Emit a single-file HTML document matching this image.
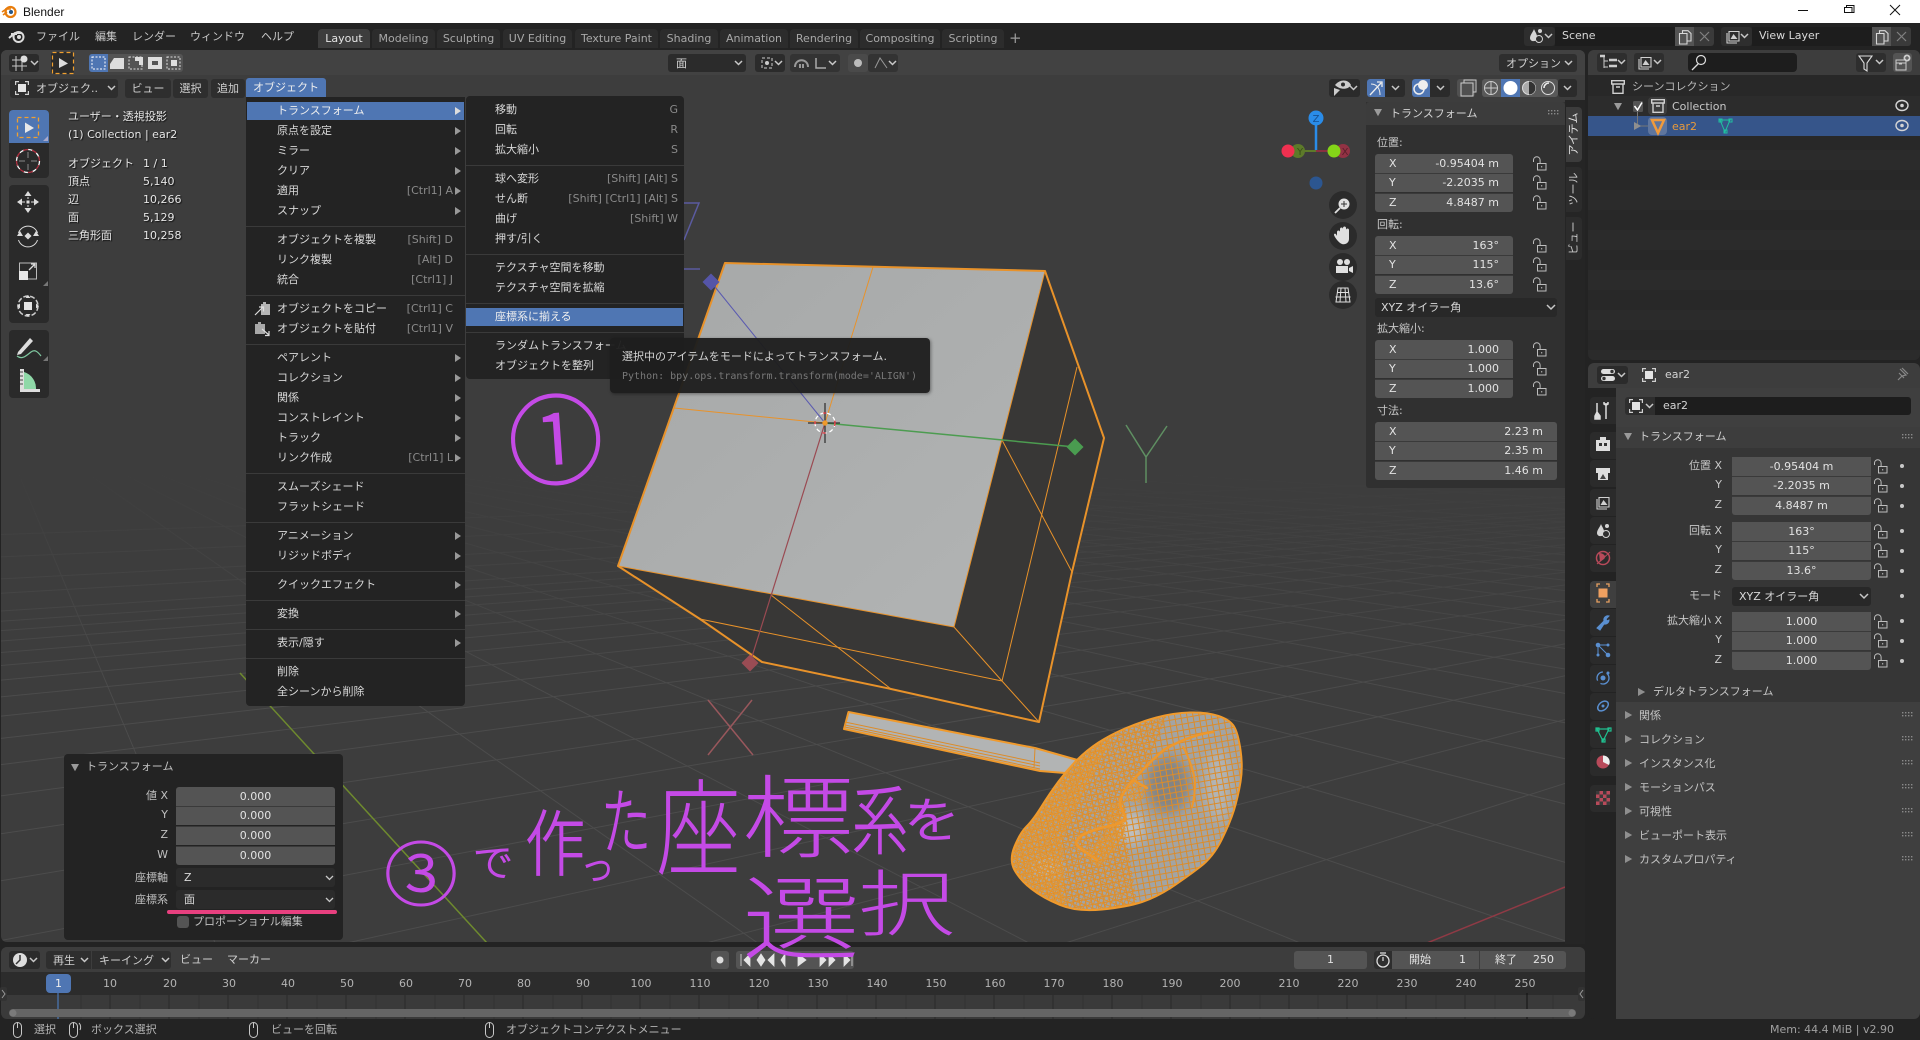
<!DOCTYPE html>
<html lang="ja"><head><meta charset="utf-8"><title>Blender</title>
<style>
*{box-sizing:border-box}
html,body{margin:0;padding:0;background:#232323}
body{position:relative;width:1920px;height:1040px;overflow:hidden;font:11px/18px "DejaVu Sans","Noto Sans CJK JP",sans-serif;color:#d9d9d9}
div{position:absolute;white-space:nowrap}
.b{background:#2b2b2b;border-radius:3px}
.tab{top:29px;height:19px;background:#2c2c2c;border-radius:4px 4px 0 0;color:#a8a8a8;text-align:center;line-height:20px}
.mi{top:28px;color:#c8c8c8}
.h{color:#d0d0d0;line-height:20px;text-align:center;background:#2e2e2e;border-radius:3px;height:19px}
.m{left:277px}.k{right:1467px;color:#8a8a8a}.a{left:455px;width:0;height:0;border-left:6px solid #999;border-top:4px solid transparent;border-bottom:4px solid transparent}
.n{left:495px}.j{right:1242px;color:#8a8a8a}
.sep{height:1px;background:#3a3a3a}
.o{left:68px;color:#e6e6e6;text-shadow:1px 1px 1px #111}.v{left:143px;color:#e6e6e6;text-shadow:1px 1px 1px #111}
.f{background:#545454;color:#e2e2e2;height:19px;line-height:19px}
.g{box-shadow:inset 0 1px #3a3a3a}
.f i{position:absolute;left:14px;font-style:normal}.f u{position:absolute;right:14px;text-decoration:none}
.c{text-align:center}
.d{background:#282828;height:19px;line-height:19px;border-radius:3px;color:#d9d9d9}
.l{color:#c8c8c8}
.rl{right:198px;color:#c8c8c8}
.tb{left:1590px;width:26px;height:27px;background:#2b2b2b;border-radius:4px 0 0 4px}
.ph{left:1639px;color:#c4c4c4}
.r{top:975px;transform:translateX(-50%);color:#b4b4b4}
.vt{transform:translate(-50%,-50%) rotate(-90deg);color:#c8c8c8}
.st{top:1021px;color:#b4b4b4}
.rd{color:#c0c0c0}
svg{position:absolute;left:0;top:0}
</style></head><body>

<!-- title bar -->
<div style="left:0;top:0;width:1920px;height:23px;background:#fff"></div>
<div style="left:23px;top:4px;color:#111;font:12px/16px 'Liberation Sans',sans-serif">Blender</div>

<!-- top bar -->
<div class="mi" style="left:36px">ファイル</div><div class="mi" style="left:95px">編集</div><div class="mi" style="left:132px">レンダー</div><div class="mi" style="left:190px">ウィンドウ</div><div class="mi" style="left:261px">ヘルプ</div>
<div class="tab" style="left:318px;width:52px;background:#3d3d3d;color:#e4e4e4">Layout</div>
<div class="tab" style="left:372px;width:63px">Modeling</div>
<div class="tab" style="left:437px;width:63px">Sculpting</div>
<div class="tab" style="left:503px;width:69px">UV Editing</div>
<div class="tab" style="left:575px;width:83px">Texture Paint</div>
<div class="tab" style="left:660px;width:58px">Shading</div>
<div class="tab" style="left:720px;width:68px">Animation</div>
<div class="tab" style="left:790px;width:68px">Rendering</div>
<div class="tab" style="left:860px;width:80px">Compositing</div>
<div class="tab" style="left:942px;width:62px">Scripting</div>
<div style="left:1009px;top:27px;color:#9a9a9a;font-size:15px;line-height:22px">+</div>
<div class="b" style="left:1524px;top:27px;width:31px;height:19px;background:#2e2e2e"></div>
<div style="left:1555px;top:27px;width:120px;height:19px;background:#1d1d1d;color:#d9d9d9;padding-left:7px;line-height:18px">Scene</div>
<div style="left:1675px;top:27px;width:19px;height:19px;background:#545454"></div>
<div style="left:1694px;top:27px;width:20px;height:19px;background:#3a3a3a;border-radius:0 3px 3px 0"></div>
<div class="b" style="left:1721px;top:27px;width:31px;height:19px;background:#2e2e2e"></div>
<div style="left:1752px;top:27px;width:120px;height:19px;background:#1d1d1d;color:#d9d9d9;padding-left:7px;line-height:18px">View Layer</div>
<div style="left:1872px;top:27px;width:19px;height:19px;background:#545454"></div>
<div style="left:1891px;top:27px;width:20px;height:19px;background:#3a3a3a;border-radius:0 3px 3px 0"></div>

<!-- viewport scene -->
<div style="left:1px;top:50px;width:1584px;height:892px;overflow:hidden;border-radius:6px;background:#3d3d3d">
<svg width="1920" height="1040" style="left:-1px;top:-50px">
<defs>
<linearGradient id="fade" x1="0" y1="0" x2="0" y2="1"><stop offset="0" stop-color="#3d3d3d"/><stop offset="1" stop-color="#3d3d3d" stop-opacity="0"/></linearGradient>
<linearGradient id="face" x1="0" y1="0" x2="1" y2="1"><stop offset="0" stop-color="#a6a8a8"/><stop offset="1" stop-color="#b2b4b4"/></linearGradient>
<filter id="soft" x="-50%" y="-50%" width="200%" height="200%"><feGaussianBlur stdDeviation="6"/></filter>
<pattern id="meshC" width="6" height="6" patternUnits="userSpaceOnUse" patternTransform="rotate(-10)"><path d="M0 .5H6M.5 0V6" stroke="#dc8c2a" stroke-width="1" fill="none"/></pattern>
<pattern id="meshM" width="4" height="4" patternUnits="userSpaceOnUse" patternTransform="rotate(22)"><path d="M0 .5H4M.5 0V4" stroke="#e0902c" stroke-width=".9" fill="none"/></pattern>
<pattern id="meshF" width="3" height="3" patternUnits="userSpaceOnUse" patternTransform="rotate(35)"><path d="M0 .5H3M.5 0V3" stroke="#e8962c" stroke-width=".8" fill="none"/></pattern>
<path id="ear" d="M1218.500 716Q1230 720 1234 726.500Q1238 733 1240.500 750Q1243 767 1240.500 782Q1238 797 1234 810Q1230 823 1221.500 840Q1213 857 1200 867Q1187 877 1172 887Q1157 897 1142 902Q1127 907 1102 909.500Q1077 912 1060 905Q1043 898 1031.500 889Q1020 880 1014.500 870Q1009 860 1014.500 846.500Q1020 833 1026.500 826.500Q1033 820 1041.500 806.500Q1050 793 1058.500 781.500Q1067 770 1077 760Q1087 750 1098.500 742.500Q1110 735 1125 728.500Q1140 722 1156.500 717.500Q1173 713 1190 712.500Q1207 712 1218.500 716Z"/>
<clipPath id="ec"><use href="#ear"/></clipPath>
</defs>
<path fill="none" stroke="#4c4c4c" d="M-10 405L-961 1000M-10 405L-661 1000M-10 405L-361 1000M-10 405L-61 1000M-10 405L239 1000M-10 405L839 1000M-10 405L1139 1000M-10 405L1439 1000M-10 405L1739 1000M-10 405L2039 1000M-10 405L2339 1000M-10 405L2639 1000M-10 405L2939 1000M-10 405L3239 1000M-10 405L3539 1000M-10 405L3839 1000M-10 405L4139 1000M-10 405L4439 1000M-10 405L4739 1000M-10 405L5039 1000M-10 405L5339 1000M-10 405L5639 1000M-10 405L5939 1000M-10 405L6239 1000M-10 405L6539 1000M-10 405L7000 1000M-10 405L7500 1000M-10 405L8000 1000M-10 405L9000 1000M-10 405L10000 1000M-10 405L12000 1000M-10 405L15000 1000"/>
<path fill="none" stroke="#4c4c4c" d="M2640 440L2087 1000M2640 440L1687 1000M2640 440L887 1000M2640 440L487 1000M2640 440L87 1000M2640 440L-313 1000M2640 440L-713 1000M2640 440L-1113 1000M2640 440L-1513 1000M2640 440L-1913 1000M2640 440L-2313 1000M2640 440L-2713 1000M2640 440L-3113 1000M2640 440L-3513 1000M2640 440L-3913 1000M2640 440L-4313 1000M2640 440L-4713 1000M2640 440L-5113 1000M2640 440L-5513 1000M2640 440L-6000 1000M2640 440L-7000 1000M2640 440L-8000 1000M2640 440L-10000 1000M2640 440L-13000 1000"/>
<rect x="0" y="470" width="1920" height="230" fill="url(#fade)"/>
<rect x="0" y="0" width="1920" height="470" fill="#3d3d3d"/>
<path d="M240 673L487 943" stroke="#6e8a2e" stroke-width="1.500"/>
<path d="M1427 943L1565 887" stroke="#8f3a45" stroke-width="1.500"/>
<!-- empties -->
<path d="M684 203H699L684 240M684 269H700" fill="none" stroke="#5b5ba0" stroke-width="1.500"/>
<path d="M1126 425L1146 457L1167 426M1146 457V483" fill="none" stroke="#5f8f62" stroke-width="1.500"/>
<path d="M708 700L753 755M752 700L708 755" fill="none" stroke="#98575c" stroke-width="1.500"/>
<!-- cube -->
<path d="M725 263L1045 271L1104 438L1039 722L762 662L700 619L618 566Z" fill="#383736"/>
<path d="M725 263L1045 271L954 627L618 566Z" fill="url(#face)"/>
<g fill="none" stroke="#e8922a">
<path d="M954 627L618 566M954 627L1045 271M954 627L1002 681L1039 722M700 619L1002 681M771 595L891 689M1002 440L1072 572M1077 367L1002 681M873 267L825 423M674 408L825 423" stroke-width="1"/>
<path d="M725 263L1045 271L1104 438L1072 572L1039 722L891 689L762 662L700 619L618 566Z" stroke-width="2" stroke-linejoin="round"/>
</g>
<path d="M711 282L825 423" stroke="#5a5ab0" stroke-width="1"/>
<path d="M825 423L1075 447" stroke="#4c9c50" stroke-width="1.500"/>
<path d="M825 423L750 663" stroke="#9a4a52" stroke-width="1.200"/>
<rect x="705" y="276" width="12" height="12" fill="#5555a8" transform="rotate(45 711 282)"/>
<rect x="1069" y="441" width="12" height="12" fill="#4a9c50" transform="rotate(45 1075 447)"/>
<rect x="744" y="657" width="12" height="12" fill="#9a4c54" transform="rotate(45 750 663)"/>
<path d="M808 423H840M825 403V443" stroke="#222" stroke-width="1.500" opacity=".75"/>
<circle cx="825" cy="423" r="10" fill="none" stroke="#fff" stroke-width="1.300" stroke-dasharray="4 3"/>
<circle cx="825" cy="423" r="10" fill="none" stroke="#e8303a" stroke-width="1.300" stroke-dasharray="3 12" />
<circle cx="825" cy="423" r="2.700" fill="#f09a2c"/>
<!-- stick -->
<path d="M848.500 712L1035 748L1081 761L1065 773L1040 771L844 729Z" fill="#b2b4b4" stroke="#f09a2c" stroke-width="2" stroke-linejoin="round"/>
<path d="M845 722L1040 763M845 725L1040 766M845 727L1040 769M1035 748L1034 768" stroke="#dc8c2a" stroke-width="1" fill="none"/>
<!-- ear -->
<use href="#ear" fill="#a2a4a4"/>
<g clip-path="url(#ec)">
<ellipse cx="1168" cy="785" rx="22" ry="28" fill="#6a6a6a" opacity=".55" filter="url(#soft)"/>
<ellipse cx="1218" cy="785" rx="12" ry="36" fill="#c4c6c6" opacity=".5" filter="url(#soft)"/>
<ellipse cx="1132" cy="828" rx="12" ry="16" fill="#dcdcdc" opacity=".55" filter="url(#soft)"/>
<ellipse cx="1046" cy="868" rx="14" ry="9" fill="#d0d0d0" opacity=".55" filter="url(#soft)"/>
<rect x="1000" y="700" width="260" height="220" fill="url(#meshC)"/>
<path d="M1173 700L1147 767L1122 795L1125 830L1140 920H1000V700Z" fill="url(#meshM)"/>
<path d="M1125 715L1085 790L1062 840L1066 920H1000V800L1060 740Z" fill="url(#meshF)"/>
<path d="M1110 805L1125 800L1128 825L1115 850L1098 868L1085 855L1105 835Z" fill="url(#meshF)"/>
<path d="M1133 780L1147 788L1140 803L1123 800Z" fill="url(#meshF)"/>
</g>
<g fill="none" stroke="#ee982c" stroke-linecap="round" stroke-linejoin="round">
<path d="M1213 732C1197 734 1180 741 1167 748C1157 754 1143 770 1133 780C1127 787 1120 797 1120 803C1120 810 1127 815 1125 819C1120 825 1108 826 1100 828C1092 831 1084 833 1080 837C1073 843 1076 846 1087 853L1097 860" stroke-width="2.600"/>
<path d="M1183 747C1189 757 1195 775 1195 783C1195 792 1194 800 1192 807" stroke-width="2"/>
<path d="M1133 780L1147 788" stroke-width="2.500"/>
</g>
<use href="#ear" fill="none" stroke="#f09a2c" stroke-width="2"/>
</svg>
</div>

<!-- viewport headers -->
<div style="left:1px;top:50px;width:1584px;height:25px;background:#424242;border-radius:6px 6px 0 0"></div>
<div style="left:89px;top:54px;width:94px;height:18px;background:#545454;border-radius:3px"></div>
<div style="left:89px;top:54px;width:19px;height:18px;background:#4f76b3;border-radius:3px 0 0 3px"></div>
<div class="b" style="left:9px;top:54px;width:30px;height:18px"></div>
<div class="b" style="left:51px;top:52px;width:23px;height:22px;background:#2b2b2b"></div>
<div class="d" style="left:668px;top:54px;width:78px;height:18px;padding-left:8px;line-height:19px;background:#2b2b2b">面</div>
<div class="b" style="left:755px;top:54px;width:30px;height:18px"></div>
<div class="b" style="left:790px;top:54px;width:50px;height:18px;background:#333"></div>
<div class="b" style="left:848px;top:54px;width:20px;height:18px;background:#4a4a4a"></div>
<div class="b" style="left:868px;top:54px;width:30px;height:18px;background:#333"></div>
<div class="b" style="left:1499px;top:54px;width:78px;height:18px;text-align:left;padding-left:7px;line-height:19px;color:#d0d0d0;background:#2e2e2e">オプション</div>

<div class="h" style="left:10px;top:79px;width:108px;text-align:left;padding-left:26px">オブジェク..</div>
<div class="h" style="left:125px;top:79px;width:46px">ビュー</div>
<div class="h" style="left:173px;top:79px;width:35px">選択</div>
<div class="h" style="left:211px;top:79px;width:34px">追加</div>
<div class="h" style="left:246px;top:78px;width:80px;height:19px;background:#4f76b3;color:#eee;border-radius:3px 3px 0 0">オブジェクト</div>
<div class="b" style="left:1329px;top:79px;width:31px;height:18px"></div>
<div class="b" style="left:1367px;top:79px;width:38px;height:18px"></div>
<div style="left:1367px;top:79px;width:18px;height:18px;background:#4f76b3;border-radius:3px 0 0 3px"></div>
<div class="b" style="left:1412px;top:79px;width:38px;height:18px"></div>
<div style="left:1412px;top:79px;width:18px;height:18px;background:#4f76b3;border-radius:3px 0 0 3px"></div>
<div class="b" style="left:1457px;top:79px;width:18px;height:18px;background:#505050"></div>
<div class="b" style="left:1482px;top:79px;width:76px;height:18px;background:#595959"></div>
<div style="left:1501px;top:79px;width:19px;height:18px;background:#4f76b3"></div>
<div class="b" style="left:1558px;top:79px;width:19px;height:18px"></div>

<!-- tools -->
<div class="b" style="left:9px;top:110px;width:40px;height:68px;background:#2a2a2a;border-radius:4px"></div>
<div style="left:9px;top:110px;width:40px;height:33px;background:#4f76b3;border-radius:4px 4px 0 0"></div>
<div class="b" style="left:9px;top:185px;width:40px;height:138px;background:#2a2a2a;border-radius:4px"></div>
<div class="b" style="left:9px;top:330px;width:40px;height:68px;background:#2a2a2a;border-radius:4px"></div>

<!-- overlay text -->
<div class="o" style="top:108px">ユーザー・透視投影</div>
<div class="o" style="top:126px">(1) Collection | ear2</div>
<div class="o" style="top:155px">オブジェクト</div><div class="v" style="top:155px">1 / 1</div>
<div class="o" style="top:173px">頂点</div><div class="v" style="top:173px">5,140</div>
<div class="o" style="top:191px">辺</div><div class="v" style="top:191px">10,266</div>
<div class="o" style="top:209px">面</div><div class="v" style="top:209px">5,129</div>
<div class="o" style="top:227px">三角形面</div><div class="v" style="top:227px">10,258</div>

<!-- N panel -->
<div style="left:1565px;top:100px;width:20px;height:844px;background:#252525"></div>
<div style="left:1366px;top:102px;width:199px;height:386px;background:#303030;border-radius:0 0 0 3px"></div>
<div style="left:1366px;top:102px;width:199px;height:23px;background:#3c3c3c;border-radius:3px 3px 0 0"></div>
<div style="left:1390px;top:105px;color:#d4d4d4">トランスフォーム</div>
<div class="l" style="left:1377px;top:134px">位置:</div>
<div class="f" style="left:1375px;top:154px;width:138px;border-radius:3px 3px 0 0"><i>X</i><u>-0.95404 m</u></div>
<div class="f g" style="left:1375px;top:173px;width:138px"><i>Y</i><u>-2.2035 m</u></div>
<div class="f g" style="left:1375px;top:193px;width:138px;border-radius:0 0 3px 3px"><i>Z</i><u>4.8487 m</u></div>
<div class="l" style="left:1377px;top:216px">回転:</div>
<div class="f" style="left:1375px;top:236px;width:138px;border-radius:3px 3px 0 0"><i>X</i><u>163°</u></div>
<div class="f g" style="left:1375px;top:255px;width:138px"><i>Y</i><u>115°</u></div>
<div class="f g" style="left:1375px;top:275px;width:138px;border-radius:0 0 3px 3px"><i>Z</i><u>13.6°</u></div>
<div class="d" style="left:1375px;top:298px;width:182px;padding-left:6px">XYZ オイラー角</div>
<div class="l" style="left:1377px;top:320px">拡大縮小:</div>
<div class="f" style="left:1375px;top:340px;width:138px;border-radius:3px 3px 0 0"><i>X</i><u>1.000</u></div>
<div class="f g" style="left:1375px;top:359px;width:138px"><i>Y</i><u>1.000</u></div>
<div class="f g" style="left:1375px;top:379px;width:138px;border-radius:0 0 3px 3px"><i>Z</i><u>1.000</u></div>
<div class="l" style="left:1377px;top:402px">寸法:</div>
<div class="f" style="left:1375px;top:422px;width:182px;border-radius:3px 3px 0 0"><i>X</i><u>2.23 m</u></div>
<div class="f g" style="left:1375px;top:441px;width:182px"><i>Y</i><u>2.35 m</u></div>
<div class="f g" style="left:1375px;top:461px;width:182px;border-radius:0 0 3px 3px"><i>Z</i><u>1.46 m</u></div>
<div style="left:1566px;top:107px;width:16px;height:55px;background:#3c3c3c;border-radius:0 4px 4px 0"></div>
<div style="left:1566px;top:167px;width:16px;height:45px;background:#2c2c2c;border-radius:0 4px 4px 0"></div>
<div style="left:1566px;top:217px;width:16px;height:43px;background:#2c2c2c;border-radius:0 4px 4px 0"></div>
<div class="vt" style="left:1574px;top:134px;color:#e0e0e0">アイテム</div>
<div class="vt" style="left:1574px;top:189px">ツール</div>
<div class="vt" style="left:1574px;top:238px">ビュー</div>

<!-- Redo panel -->
<div style="left:64px;top:754px;width:279px;height:186px;background:#232323;border-radius:4px"></div>
<div class="rd" style="left:86px;top:758px">トランスフォーム</div>
<div class="rd" style="right:1752px;top:787px">値 X</div><div class="rd" style="right:1752px;top:806px">Y</div><div class="rd" style="right:1752px;top:826px">Z</div><div class="rd" style="right:1752px;top:846px">W</div>
<div class="f c" style="left:176px;top:787px;width:159px;border-radius:3px 3px 0 0">0.000</div>
<div class="f c g" style="left:176px;top:806px;width:159px">0.000</div>
<div class="f c g" style="left:176px;top:826px;width:159px">0.000</div>
<div class="f c g" style="left:176px;top:846px;width:159px;border-radius:0 0 3px 3px">0.000</div>
<div class="rd" style="right:1752px;top:869px">座標軸</div><div class="rd" style="right:1752px;top:891px">座標系</div>
<div class="d" style="left:176px;top:868px;width:159px;padding-left:8px;background:#2b2b2b">Z</div>
<div class="d" style="left:176px;top:890px;width:159px;padding-left:8px;background:#2b2b2b">面</div>
<div style="left:167px;top:910px;width:170px;height:4px;background:#e8407f;border-radius:2px"></div>
<div style="left:177px;top:916px;width:12px;height:12px;background:#545454;border-radius:3px"></div>
<div class="rd" style="left:193px;top:913px">プロポーショナル編集</div>

<!-- Object menu -->
<div style="left:246px;top:97px;width:219px;height:609px;background:#232323;border-radius:0 0 4px 4px"></div>
<div style="left:247px;top:102px;width:217px;height:18px;background:#4f76b3"></div>
<div class="m" style="top:102px;color:#eee">トランスフォーム</div><div class="a" style="top:107px;border-left-color:#ddd"></div>
<div class="m" style="top:122px">原点を設定</div><div class="a" style="top:127px"></div>
<div class="m" style="top:142px">ミラー</div><div class="a" style="top:147px"></div>
<div class="m" style="top:162px">クリア</div><div class="a" style="top:167px"></div>
<div class="m" style="top:182px">適用</div><div class="k" style="top:182px">[Ctrl1] A</div><div class="a" style="top:187px"></div>
<div class="m" style="top:202px">スナップ</div><div class="a" style="top:207px"></div>
<div class="sep" style="left:246px;top:226px;width:219px"></div>
<div class="m" style="top:231px">オブジェクトを複製</div><div class="k" style="top:231px">[Shift] D</div>
<div class="m" style="top:251px">リンク複製</div><div class="k" style="top:251px">[Alt] D</div>
<div class="m" style="top:271px">統合</div><div class="k" style="top:271px">[Ctrl1] J</div>
<div class="sep" style="left:246px;top:295px;width:219px"></div>
<div class="m" style="top:300px">オブジェクトをコピー</div><div class="k" style="top:300px">[Ctrl1] C</div>
<div class="m" style="top:320px">オブジェクトを貼付</div><div class="k" style="top:320px">[Ctrl1] V</div>
<div class="sep" style="left:246px;top:344px;width:219px"></div>
<div class="m" style="top:349px">ペアレント</div><div class="a" style="top:354px"></div>
<div class="m" style="top:369px">コレクション</div><div class="a" style="top:374px"></div>
<div class="m" style="top:389px">関係</div><div class="a" style="top:394px"></div>
<div class="m" style="top:409px">コンストレイント</div><div class="a" style="top:414px"></div>
<div class="m" style="top:429px">トラック</div><div class="a" style="top:434px"></div>
<div class="m" style="top:449px">リンク作成</div><div class="k" style="top:449px">[Ctrl1] L</div><div class="a" style="top:454px"></div>
<div class="sep" style="left:246px;top:473px;width:219px"></div>
<div class="m" style="top:478px">スムーズシェード</div>
<div class="m" style="top:498px">フラットシェード</div>
<div class="sep" style="left:246px;top:522px;width:219px"></div>
<div class="m" style="top:527px">アニメーション</div><div class="a" style="top:532px"></div>
<div class="m" style="top:547px">リジッドボディ</div><div class="a" style="top:552px"></div>
<div class="sep" style="left:246px;top:571px;width:219px"></div>
<div class="m" style="top:576px">クイックエフェクト</div><div class="a" style="top:581px"></div>
<div class="sep" style="left:246px;top:600px;width:219px"></div>
<div class="m" style="top:605px">変換</div><div class="a" style="top:610px"></div>
<div class="sep" style="left:246px;top:629px;width:219px"></div>
<div class="m" style="top:634px">表示/隠す</div><div class="a" style="top:639px"></div>
<div class="sep" style="left:246px;top:658px;width:219px"></div>
<div class="m" style="top:663px">削除</div>
<div class="m" style="top:683px">全シーンから削除</div>

<!-- Submenu -->
<div style="left:466px;top:96px;width:218px;height:283px;background:#232323;border-radius:4px"></div>
<div class="n" style="top:101px">移動</div><div class="j" style="top:101px">G</div>
<div class="n" style="top:121px">回転</div><div class="j" style="top:121px">R</div>
<div class="n" style="top:141px">拡大縮小</div><div class="j" style="top:141px">S</div>
<div class="sep" style="left:466px;top:165px;width:218px"></div>
<div class="n" style="top:170px">球へ変形</div><div class="j" style="top:170px">[Shift] [Alt] S</div>
<div class="n" style="top:190px">せん断</div><div class="j" style="top:190px">[Shift] [Ctrl1] [Alt] S</div>
<div class="n" style="top:210px">曲げ</div><div class="j" style="top:210px">[Shift] W</div>
<div class="n" style="top:230px">押す/引く</div>
<div class="sep" style="left:466px;top:254px;width:218px"></div>
<div class="n" style="top:259px">テクスチャ空間を移動</div>
<div class="n" style="top:279px">テクスチャ空間を拡縮</div>
<div class="sep" style="left:466px;top:303px;width:218px"></div>
<div style="left:466px;top:308px;width:217px;height:18px;background:#4f76b3"></div>
<div class="n" style="top:308px;color:#eee">座標系に揃える</div>
<div class="sep" style="left:466px;top:332px;width:218px"></div>
<div class="n" style="top:337px">ランダムトランスフォーム</div>
<div class="n" style="top:357px">オブジェクトを整列</div>

<!-- Tooltip -->
<div style="left:610px;top:338px;width:320px;height:55px;background:rgba(30,30,30,.96);border-radius:4px;box-shadow:1px 1px 3px rgba(0,0,0,.4)"></div>
<div style="left:622px;top:348px;color:#d4d4d4">選択中のアイテムをモードによってトランスフォーム.</div>
<div style="left:622px;top:368px;color:#787878;font-family:'DejaVu Sans Mono','Liberation Mono',monospace;font-size:10px">Python: bpy.ops.transform.transform(mode='ALIGN')</div>

<!-- Timeline -->
<div style="left:1px;top:947px;width:1584px;height:72px;background:#3a3a3a;border-radius:6px;overflow:hidden"></div>
<div style="left:1px;top:947px;width:1584px;height:25px;background:#3d3d3d;border-radius:6px 6px 0 0"></div>
<div style="left:1px;top:972px;width:1584px;height:23px;background:#2c2c2c"></div>
<div class="b" style="left:9px;top:951px;width:31px;height:18px"></div>
<div class="h" style="left:46px;top:951px;width:45px;height:18px;text-align:left;padding-left:7px;border-radius:3px 0 0 3px">再生</div>
<div class="h" style="left:92px;top:951px;width:79px;height:18px;text-align:left;padding-left:7px;border-radius:0 3px 3px 0">キーイング</div>
<div style="left:180px;top:951px;color:#d0d0d0">ビュー</div><div style="left:227px;top:951px;color:#d0d0d0">マーカー</div>
<div style="left:711px;top:951px;width:18px;height:18px;background:#545454;border-radius:3px"></div>
<div style="left:736px;top:951px;width:118px;height:18px;background:#545454;border-radius:3px"></div>
<div class="f c" style="left:1294px;top:951px;width:73px;height:18px;line-height:18px;border-radius:3px">1</div>
<div style="left:1374px;top:951px;width:18px;height:18px;background:#2e2e2e;border-radius:3px 0 0 3px"></div>
<div class="f" style="left:1392px;top:951px;width:87px;height:18px;line-height:18px"><span style="position:absolute;left:17px">開始</span><span style="position:absolute;left:67px">1</span></div>
<div class="f" style="left:1480px;top:951px;width:86px;height:18px;line-height:18px;border-radius:0 3px 3px 0"><span style="position:absolute;left:15px">終了</span><span style="position:absolute;right:12px">250</span></div>
<div style="left:46px;top:974px;width:25px;height:19px;background:#4f76b3;border-radius:4px;color:#eee;text-align:center;line-height:19px">1</div>
<div class="r" style="left:110px">10</div><div class="r" style="left:170px">20</div><div class="r" style="left:229px">30</div><div class="r" style="left:288px">40</div><div class="r" style="left:347px">50</div><div class="r" style="left:406px">60</div><div class="r" style="left:465px">70</div><div class="r" style="left:524px">80</div><div class="r" style="left:583px">90</div><div class="r" style="left:641px">100</div><div class="r" style="left:700px">110</div><div class="r" style="left:759px">120</div><div class="r" style="left:818px">130</div><div class="r" style="left:877px">140</div><div class="r" style="left:936px">150</div><div class="r" style="left:995px">160</div><div class="r" style="left:1054px">170</div><div class="r" style="left:1113px">180</div><div class="r" style="left:1172px">190</div><div class="r" style="left:1230px">200</div><div class="r" style="left:1289px">210</div><div class="r" style="left:1348px">220</div><div class="r" style="left:1407px">230</div><div class="r" style="left:1466px">240</div><div class="r" style="left:1525px">250</div>

<!-- Outliner -->
<div style="left:1588px;top:50px;width:332px;height:310px;border-radius:6px;overflow:hidden;background:repeating-linear-gradient(180deg,#282828 0 20px,#2b2b2b 20px 40px)"></div>
<div style="left:1588px;top:50px;width:332px;height:25px;background:#3d3d3d;border-radius:6px 6px 0 0"></div>
<div style="left:1588px;top:75px;width:332px;height:21px;background:#282828"></div>
<div style="left:1588px;top:96px;width:332px;height:20px;background:#2c2c2c"></div>
<div style="left:1588px;top:116px;width:332px;height:20px;background:#36558a"></div>
<div class="b" style="left:1597px;top:53px;width:30px;height:19px;background:#2e2e2e"></div>
<div class="b" style="left:1634px;top:53px;width:30px;height:19px;background:#2e2e2e"></div>
<div class="b" style="left:1688px;top:53px;width:109px;height:19px;background:#1d1d1d;border-radius:4px"></div>
<div class="b" style="left:1856px;top:53px;width:30px;height:19px;background:#2e2e2e"></div>
<div class="b" style="left:1893px;top:53px;width:19px;height:19px;background:#545454"></div>
<div style="left:1632px;top:78px;color:#b8b8b8">シーンコレクション</div>
<div style="left:1648px;top:97px;width:19px;height:18px;background:#3d3d3d;border-radius:4px"></div>
<div style="left:1672px;top:98px;color:#c8c8c8">Collection</div>
<div style="left:1648px;top:117px;width:19px;height:18px;background:#5f769e;border-radius:4px"></div>
<div style="left:1672px;top:118px;color:#e89a3c">ear2</div>

<!-- Properties -->
<div style="left:1588px;top:363px;width:332px;height:656px;background:#232323;border-radius:6px 6px 0 6px"></div>
<div style="left:1588px;top:363px;width:332px;height:25px;background:#3d3d3d;border-radius:6px 6px 0 0"></div>
<div style="left:1616px;top:388px;width:304px;height:631px;background:#3f3f3f;border-radius:0 0 6px 0"></div>
<div class="b" style="left:1597px;top:366px;width:31px;height:18px"></div>
<div style="left:1665px;top:366px;color:#d4d4d4">ear2</div>
<div class="b" style="left:1625px;top:397px;width:30px;height:18px;background:#2e2e2e;border-radius:3px 0 0 3px"></div>
<div style="left:1655px;top:397px;width:256px;height:18px;background:#1d1d1d;border-radius:0 3px 3px 0;padding-left:8px;line-height:18px;color:#d4d4d4">ear2</div>
<div style="left:1616px;top:427px;width:304px;height:21px;background:#3d3d3d"></div>
<div style="left:1639px;top:428px;color:#d0d0d0">トランスフォーム</div>
<div style="left:1616px;top:448px;width:304px;height:254px;background:#363636"></div>
<div class="tb" style="top:397px"></div><div class="tb" style="top:432px"></div><div class="tb" style="top:460px"></div><div class="tb" style="top:489px"></div><div class="tb" style="top:517px"></div><div class="tb" style="top:545px"></div>
<div class="tb" style="top:581px;background:#3f3f3f"></div><div class="tb" style="top:609px"></div><div class="tb" style="top:637px"></div><div class="tb" style="top:665px"></div><div class="tb" style="top:693px"></div><div class="tb" style="top:721px"></div><div class="tb" style="top:749px"></div><div class="tb" style="top:785px"></div>
<div class="rl" style="top:457px">位置 X</div><div class="rl" style="top:476px">Y</div><div class="rl" style="top:496px">Z</div>
<div class="f c" style="left:1732px;top:457px;width:139px">-0.95404 m</div>
<div class="f c g" style="left:1732px;top:476px;width:139px">-2.2035 m</div>
<div class="f c g" style="left:1732px;top:496px;width:139px;border-radius:0 0 3px 3px">4.8487 m</div>
<div class="rl" style="top:522px">回転 X</div><div class="rl" style="top:541px">Y</div><div class="rl" style="top:561px">Z</div>
<div class="f c" style="left:1732px;top:522px;width:139px">163°</div>
<div class="f c g" style="left:1732px;top:541px;width:139px">115°</div>
<div class="f c g" style="left:1732px;top:561px;width:139px;border-radius:0 0 3px 3px">13.6°</div>
<div class="rl" style="top:587px">モード</div>
<div class="d" style="left:1732px;top:587px;width:139px;padding-left:7px">XYZ オイラー角</div>
<div class="rl" style="top:612px">拡大縮小 X</div><div class="rl" style="top:631px">Y</div><div class="rl" style="top:651px">Z</div>
<div class="f c" style="left:1732px;top:612px;width:139px">1.000</div>
<div class="f c g" style="left:1732px;top:631px;width:139px">1.000</div>
<div class="f c g" style="left:1732px;top:651px;width:139px;border-radius:0 0 3px 3px">1.000</div>
<div class="ph" style="left:1653px;top:683px">デルタトランスフォーム</div>
<div class="ph" style="top:707px">関係</div><div class="ph" style="top:731px">コレクション</div><div class="ph" style="top:755px">インスタンス化</div><div class="ph" style="top:779px">モーションパス</div><div class="ph" style="top:803px">可視性</div><div class="ph" style="top:827px">ビューポート表示</div><div class="ph" style="top:851px">カスタムプロパティ</div>

<!-- Status bar -->
<div class="st" style="left:34px">選択</div><div class="st" style="left:91px">ボックス選択</div><div class="st" style="left:271px">ビューを回転</div><div class="st" style="left:506px">オブジェクトコンテクストメニュー</div>
<div class="st" style="left:1770px;color:#a0a0a0">Mem: 44.4 MiB | v2.90</div>

<!-- Icon + handwriting layer -->
<svg width="1920" height="1040" viewBox="0 0 1920 1040">
<defs>
<g id="lock" fill="none" stroke="#bdbdbd" stroke-width="1"><path d="M.5 6V4a3.3 3.3 0 0 1 6.6 0V7"/><rect x="4.500" y="7.500" width="8.500" height="6.500"/><path d="M8.700 10v1.500"/></g>
<g id="grip" fill="#8a8a8a"><rect width="1.400" height="1.400"/><rect x="3" width="1.400" height="1.400"/><rect x="6" width="1.400" height="1.400"/><rect x="9" width="1.400" height="1.400"/><rect y="3" width="1.400" height="1.400"/><rect x="3" y="3" width="1.400" height="1.400"/><rect x="6" y="3" width="1.400" height="1.400"/><rect x="9" y="3" width="1.400" height="1.400"/></g>
<path id="tr" d="M0 0L9 5L0 10Z" fill="#8f8f8f" transform="scale(.8)"/>
<path id="td" d="M0 0H10L5 9Z" fill="#9a9a9a" transform="scale(.8)"/>
<path id="chev" d="M0 0L3.500 3.500L7 0" fill="none" stroke="#c8c8c8" stroke-width="1.500"/>
<g id="eye" fill="none" stroke="#d4d4d4" stroke-width="1.400"><ellipse cx="7" cy="5.500" rx="6" ry="5"/><circle cx="7" cy="5.500" r="1.800" fill="#d4d4d4" stroke="none"/></g>
<g id="mouse" fill="none" stroke="#c8c8c8" stroke-width="1"><rect x=".5" y=".5" width="8" height="15" rx="4"/><path d="M4.500 1V6"/></g>
<g id="coll" fill="none" stroke="#d0d0d0" stroke-width="1.400"><path d="M.7.7H13.300V4H.7ZM2 4V13.300H12V4M5 7H9"/></g>
<g id="obj" fill="none" stroke="#d0d0d0" stroke-width="1.200"><path d="M.6 4V.6H4M10 .6H13.400V4M13.400 10V13.400H10M4 13.400H.6V10"/><rect x="3" y="3" width="8" height="8" fill="#e4e4e4" stroke="none"/></g>
<g id="lay" fill="none" stroke="#d0d0d0" stroke-width="1.100"><path d="M1 4V14H11M3 2.500V12H13V2.500Z"/><path d="M4.500 10L7.500 5L11.500 10Z" fill="#d0d0d0" stroke="none"/></g>
<g id="copy" fill="none" stroke="#d8d8d8" stroke-width="1.100"><path d="M.5 3.500V14H8V3.500ZM3.500 3V.7H9L12 3.500V11H8"/></g>
<path id="x" d="M0 0L9 9M9 0L0 9" stroke="#808080" stroke-width="1.200"/>
<g id="scene"><path d="M5 0C6 3 9 6 8 10C7 13 1 13 1 9C1 6 4 3 5 0Z" fill="#d4d4d4"/><circle cx="11" cy="2" r="2" fill="#d4d4d4"/><circle cx="10" cy="10" r="3.500" fill="#2e2e2e" stroke="#d4d4d4"/></g>
</defs>

<!-- title icons -->
<circle cx="10.500" cy="12" r="5" fill="none" stroke="#e87d0d" stroke-width="2.200"/><path d="M2 12L9 7M5 9H11M3 15L7 12" stroke="#e87d0d" stroke-width="1.600"/><circle cx="11" cy="12" r="2" fill="#265787"/>
<path d="M1798 10.500H1808" stroke="#111" stroke-width="1"/>
<path d="M1845.500 12.500H1853V7.500H1845.500ZM1847.500 7.500V5.500H1855V12.500H1853" transform="translate(-1 0)" fill="none" stroke="#111"/>
<path d="M1890 5L1900 15M1900 5L1890 15" stroke="#111"/>
<!-- top logo -->
<g fill="none" stroke="#dcdcdc" stroke-width="2"><circle cx="18.500" cy="37" r="5"/><path d="M9 38L15 33H22M11 34H17"/></g><circle cx="19" cy="37" r="2" fill="#dcdcdc"/>
<use href="#scene" x="1529" y="29"/><use href="#chev" x="1545" y="34"/>
<use href="#lay" x="1726" y="29"/><use href="#chev" x="1741" y="34"/>
<use href="#copy" x="1679" y="30"/><use href="#x" x="1700" y="32"/>
<use href="#copy" x="1876" y="30"/><use href="#x" x="1897" y="32"/>

<!-- header row 1 -->
<path d="M12 60H27M12 66H27M16 56V71M22 56V71" stroke="#c8c8c8" stroke-width="1"/><circle cx="24" cy="59" r="3.500" fill="#ddd"/><use href="#chev" x="31" y="61"/>
<rect x="52.500" y="52.500" width="21" height="21" fill="none" stroke="#f0a030" stroke-width="1.200" stroke-dasharray="4 3"/><path d="M59 58L68 63.500L59 68Z" fill="#ddd"/>
<rect x="92" y="57" width="13" height="12" fill="none" stroke="#fff" stroke-dasharray="2 1.500"/>
<path d="M110 64L114 58H124V69H110Z" fill="#ddd"/>
<rect x="129" y="57" width="13" height="12" fill="none" stroke="#ddd" stroke-dasharray="2 1.500"/><path d="M135 57H143V65H139V61H135Z" fill="#ddd"/>
<path d="M148 57H162V69H148ZM152 61V65H158V61Z" fill="#ddd" fill-rule="evenodd"/>
<rect x="167" y="57" width="13" height="12" fill="none" stroke="#ddd" stroke-dasharray="2 1.500"/><rect x="171" y="60" width="6" height="6" fill="#ddd"/>
<use href="#chev" x="735" y="61"/>
<rect x="762" y="58" width="10" height="10" fill="none" stroke="#ccc" stroke-dasharray="3 2"/><circle cx="767" cy="63" r="2" fill="#ccc"/><use href="#chev" x="775" y="61"/>
<path d="M795 67C795 58 808 58 808 67M800 68V64M803 68V64" fill="none" stroke="#999" stroke-width="2"/><path d="M816 58V68H826" fill="none" stroke="#aaa" stroke-width="1.500"/><use href="#chev" x="829" y="61"/>
<circle cx="858" cy="63" r="4" fill="#bbb"/><path d="M875 68L880 58L887 68" fill="none" stroke="#999"/><use href="#chev" x="889" y="61"/>
<use href="#chev" x="1565" y="61"/>

<!-- header row 2 -->
<use href="#obj" x="15" y="81"/><use href="#chev" x="108" y="86"/>
<path d="M1335 85C1340 79 1348 79 1351 85C1348 90 1340 90 1335 85Z" fill="#ccc"/><path d="M1334 88L1334 96L1340 90Z" fill="#ccc"/><circle cx="1343" cy="84.500" r="2" fill="#2b2b2b"/><use href="#chev" x="1350" y="86"/>
<path d="M1370 95L1381 83M1377 82H1382V87" fill="none" stroke="#eee" stroke-width="1.300"/><path d="M1371 84C1378 84 1380 90 1380 95" fill="none" stroke="#eee"/><use href="#chev" x="1392" y="86"/>
<circle cx="1419" cy="89" r="5" fill="none" stroke="#eee" stroke-width="1.500"/><circle cx="1423" cy="85" r="5" fill="#eee"/><use href="#chev" x="1437" y="86"/>
<path d="M1461 83H1473V96H1461ZM1464 83V80H1476V92H1473" fill="none" stroke="#ccc"/>
<circle cx="1491" cy="88" r="6.500" fill="none" stroke="#ccc"/><path d="M1484.500 88H1497.500M1491 81.500V94.500" stroke="#ccc"/>
<circle cx="1510.500" cy="88" r="7" fill="#fff"/>
<circle cx="1529" cy="88" r="6.500" fill="#aaa" stroke="#ddd"/><path d="M1529 81.500A6.500 6.500 0 0 1 1529 94.500Z" fill="#333"/>
<circle cx="1548" cy="88" r="6.500" fill="#555" stroke="#ddd"/><path d="M1544 88A5 5 0 0 1 1549 83" fill="none" stroke="#eee" stroke-width="1.500"/>
<use href="#chev" x="1564" y="86"/>

<!-- toolbar icons -->
<rect x="17.500" y="117.500" width="21" height="20" fill="none" stroke="#f0a030" stroke-width="1.300" stroke-dasharray="4 3"/><path d="M25 122.500L34 128L25 133Z" fill="#e8e8e8"/><path d="M43 141H48V136Z" fill="#aac"/>
<circle cx="28" cy="161" r="11.500" fill="none" stroke="#fff" stroke-width="1.300" stroke-dasharray="5 4"/><circle cx="28" cy="161" r="11.500" fill="none" stroke="#b03040" stroke-width="1.300" stroke-dasharray="5 4" stroke-dashoffset="5"/><path d="M19 161H25M31 161H37M28 152V158M28 164V170" stroke="#888"/>
<path d="M28 191L24.500 196H31.500ZM28 213L24.500 208H31.500ZM17 202L22 198.500V205.500ZM39 202L34 198.500V205.500Z" fill="#ddd"/><path d="M28 197V199M28 205V207M22 202H25M31 202H34" stroke="#ddd"/><rect x="26.500" y="200.500" width="3" height="3" fill="#ddd" />
<path d="M18.500 233A10 10 0 0 1 37.500 233M18.500 240A10 10 0 0 0 37.500 240" fill="none" stroke="#ddd"/><path d="M17 236H23L20 231ZM33 236H39L36 231Z" fill="#ddd"/><rect x="25.500" y="233.500" width="5" height="5" fill="#ddd" transform="rotate(45 28 236)"/>
<path d="M19.500 263H36.500V279H19.500Z" fill="none" stroke="#bbb"/><rect x="19" y="271" width="9" height="9" fill="#e8e8e8"/><path d="M29 270L35 264M31 264H35V268" fill="none" stroke="#ddd" stroke-width="1.300"/><path d="M43 286H48V281Z" fill="#777"/>
<circle cx="28" cy="306" r="10" fill="none" stroke="#ccc" stroke-width="1.500" stroke-dasharray="5 2"/><rect x="24" y="302" width="8" height="8" fill="#e4e4e4"/><path d="M28 295L25.500 298H30.500ZM28 317L25.500 314H30.500ZM17 306L20 303.500V308.500ZM39 306L36 303.500V308.500Z" fill="#ddd"/>
<path d="M18 352L30 338L33 341L21 354L17 355Z" fill="#ddd"/><path d="M17 356C22 360 26 356 31 352C35 349 38 352 41 356" fill="none" stroke="#7fc8a0" stroke-width="1.200"/><path d="M43 361H48V356Z" fill="#777"/>
<path d="M20 369H24V389H40V392H20Z" fill="#ddd"/><path d="M24 389V372A17 17 0 0 1 36 389Z" fill="#8fd8a8"/><path d="M20 372H23M20 376H23M20 380H23M20 384H23" stroke="#444"/>

<!-- menu icons -->
<path d="M261 304H263V302H266V304H270V315H261Z" fill="#b4b4b4"/><path d="M255 316L263 308M259 308H263.500V312.500" fill="none" stroke="#ddd" stroke-width="1.200" transform="translate(0 -1)"/>
<path d="M255 324H258V322H261V324H265V334H255Z" fill="#a8a8a8"/><path d="M262 329L269 335M269 331V335.500H265" fill="none" stroke="#ddd" stroke-width="1.200"/>

<!-- N panel small -->
<use href="#td" x="1374" y="109"/><use href="#grip" x="1548" y="110"/>
<use href="#lock" x="1533" y="156"/><use href="#lock" x="1533" y="175"/><use href="#lock" x="1533" y="195"/>
<use href="#lock" x="1533" y="238"/><use href="#lock" x="1533" y="257"/><use href="#lock" x="1533" y="277"/>
<use href="#lock" x="1533" y="342"/><use href="#lock" x="1533" y="361"/><use href="#lock" x="1533" y="381"/>
<path d="M1547 305L1551 309L1555 305" fill="none" stroke="#c8c8c8" stroke-width="1.500"/>

<!-- gizmo -->
<path d="M1316 125V151" stroke="#2a8ce8" stroke-width="2.500"/><path d="M1316 151H1343" stroke="#8a3040" stroke-width="2"/><path d="M1298 151H1316" stroke="#5d7a2a" stroke-width="2"/>
<circle cx="1316" cy="183" r="6.500" fill="#2c5690"/>
<circle cx="1298" cy="151" r="7" fill="#5d7a2a"/><circle cx="1343" cy="151" r="7" fill="#923244"/>
<circle cx="1288" cy="151" r="6.500" fill="#f03050"/><circle cx="1334" cy="151" r="6.500" fill="#84d418"/>
<circle cx="1316" cy="118" r="7.500" fill="#2a8ce8"/>
<text x="1316" y="122" font-size="10" text-anchor="middle" fill="#174f90" font-family="DejaVu Sans">Z</text>
<text x="1300" y="155" font-size="10" text-anchor="middle" fill="#3a5018" font-family="DejaVu Sans">Y</text>
<text x="1345" y="155" font-size="10" text-anchor="middle" fill="#5a1f2a" font-family="DejaVu Sans">X</text>
<circle cx="1343" cy="205" r="14" fill="#2b2b2b"/><circle cx="1343" cy="236" r="14" fill="#2b2b2b"/><circle cx="1343" cy="267" r="14" fill="#2b2b2b"/><circle cx="1343" cy="295" r="14" fill="#2b2b2b"/>
<circle cx="1344" cy="204" r="5.500" fill="#e0e0e0"/><path d="M1344 201V207M1341 204H1347" stroke="#333"/><path d="M1340 208L1335 213" stroke="#e0e0e0" stroke-width="1.800"/>
<path d="M1337 236V232M1337 232C1337 230 1340 230 1340 232V229C1340 227 1343 227 1343 229V228C1343 226 1346 226 1346 228V230C1346 228 1349 228 1349 230V239C1349 243 1345 245 1342 244C1339 243 1335 238 1334 235C1334 233 1336 233 1337 236Z" fill="#e0e0e0"/>
<circle cx="1340" cy="262" r="3" fill="#e0e0e0"/><circle cx="1347" cy="262" r="3" fill="#e0e0e0"/><rect x="1336" y="266" width="12" height="7" fill="#e0e0e0"/><path d="M1349 268L1353 266V273L1349 271Z" fill="#e0e0e0"/>
<path d="M1336 302L1338 288H1348L1350 302ZM1335.500 297H1350.500M1337 292.500H1349M1341 288L1340 302M1345 288L1346 302" fill="none" stroke="#e0e0e0"/>

<!-- outliner icons -->
<path d="M1604 57V68M1604 61H1608M1604 67H1608" stroke="#ccc" fill="none"/><path d="M1600 56H1605M1609 60H1617M1609 66H1617" stroke="#ccc" stroke-width="2.500"/><use href="#chev" x="1618" y="60"/>
<use href="#lay" x="1638" y="55"/><use href="#chev" x="1654" y="60"/>
<circle cx="1701" cy="60" r="4.500" fill="none" stroke="#ddd" stroke-width="1.200"/><path d="M1698 64L1692 70" stroke="#ddd" stroke-width="1.300"/>
<path d="M1859 56H1872L1867 63V71L1864 69V63Z" fill="none" stroke="#ddd" stroke-width="1.100"/><use href="#chev" x="1876" y="60"/>
<path d="M1896 60H1906V70H1896ZM1899 64H1902M1896 63H1906" fill="none" stroke="#ccc"/><circle cx="1907" cy="58" r="3.500" fill="#ccc"/><path d="M1905 58H1909M1907 56V60" stroke="#444"/>
<use href="#coll" x="1611" y="80"/><use href="#td" x="1614" y="103"/>
<rect x="1633" y="101" width="10" height="11" rx="1.500" fill="#545454"/><path d="M1634.500 106L1637.500 110L1642 102.500" fill="none" stroke="#fff" stroke-width="1.500"/>
<use href="#coll" x="1651" y="99"/><path d="M1637.500 112V126H1648" fill="none" stroke="#777"/>
<use href="#tr" x="1634" y="122"/>
<path d="M1652 120H1664L1658 133Z" fill="none" stroke="#f09a3c" stroke-width="2.500"/>
<path d="M1720 120H1730L1725 132ZM1719 119h3v3h-3ZM1729 119h3v3h-3ZM1724 130h3v3h-3Z" fill="none" stroke="#20c0a0" stroke-width="1"/>
<use href="#eye" x="1895" y="100"/><use href="#eye" x="1895" y="120"/>

<!-- properties header icons -->
<rect x="1601" y="369" width="14" height="5" rx="2.500" fill="#ddd"/><rect x="1601" y="376" width="14" height="5" rx="2.500" fill="#ddd"/><circle cx="1612" cy="371.500" r="1.700" fill="#333"/><circle cx="1604" cy="378.500" r="1.700" fill="#333"/><use href="#chev" x="1618" y="373"/>
<use href="#obj" x="1642" y="368"/><use href="#obj" x="1629" y="399"/><use href="#chev" x="1646" y="404"/>
<path d="M1900 369L1906 375L1902 376L1898 380M1902 368L1908 374M1899 373L1904 378" fill="none" stroke="#888" stroke-width="1.200"/>
<use href="#td" x="1624" y="433"/><use href="#grip" x="1902" y="434"/>
<use href="#lock" x="1874" y="459"/><use href="#lock" x="1874" y="478"/><use href="#lock" x="1874" y="498"/><use href="#lock" x="1874" y="524"/><use href="#lock" x="1874" y="543"/><use href="#lock" x="1874" y="563"/><use href="#lock" x="1874" y="614"/><use href="#lock" x="1874" y="633"/><use href="#lock" x="1874" y="653"/>
<g fill="#c8c8c8"><circle cx="1902" cy="466" r="2"/><circle cx="1902" cy="486" r="2"/><circle cx="1902" cy="506" r="2"/><circle cx="1902" cy="531" r="2"/><circle cx="1902" cy="551" r="2"/><circle cx="1902" cy="571" r="2"/><circle cx="1902" cy="596" r="2"/><circle cx="1902" cy="621" r="2"/><circle cx="1902" cy="641" r="2"/><circle cx="1902" cy="661" r="2"/></g>
<path d="M1860 594L1864 598L1868 594" fill="none" stroke="#c8c8c8" stroke-width="1.500"/>
<!-- panels triangles/grips -->
<use href="#tr" x="1638" y="688"/>
<use href="#tr" x="1625" y="711"/><use href="#tr" x="1625" y="735"/><use href="#tr" x="1625" y="759"/><use href="#tr" x="1625" y="783"/><use href="#tr" x="1625" y="807"/><use href="#tr" x="1625" y="831"/><use href="#tr" x="1625" y="855"/>
<use href="#grip" x="1902" y="712"/><use href="#grip" x="1902" y="736"/><use href="#grip" x="1902" y="760"/><use href="#grip" x="1902" y="784"/><use href="#grip" x="1902" y="808"/><use href="#grip" x="1902" y="832"/><use href="#grip" x="1902" y="856"/>
<!-- tab icons -->
<path d="M1597 403V413M1597 412L1595 416V419H1600V416ZM1606 403V408M1604 402C1604 406 1608 406 1608 402V404L1606 405L1604 404ZM1606 408V419" fill="#ddd" stroke="#ddd" stroke-width="1.500"/>
<path d="M1596 440H1610V451H1596ZM1600 440V437H1606V440" fill="#ddd"/><rect x="1599" y="443" width="3" height="3" fill="#333"/><rect x="1604" y="443" width="3" height="3" fill="#333"/>
<path d="M1596 468H1610V473H1608V480H1598V473H1596Z" fill="#ddd"/><path d="M1600 479L1603 474L1606 479Z" fill="#444"/>
<use href="#lay" x="1596" y="495"/><use href="#scene" x="1596" y="524"/>
<circle cx="1603" cy="558" r="6.500" fill="none" stroke="#b84a5a" stroke-width="1.500"/><path d="M1599 553C1603 553 1607 556 1604 559L1600 562Z" fill="#b84a5a"/><path d="M1597 564L1610 552" stroke="#b84a5a"/>
<path d="M1597 587V584H1600M1606 584H1609V587M1609 599V602H1606M1600 602H1597V599" fill="none" stroke="#e8a060" stroke-width="1.300"/><rect x="1598.500" y="588.500" width="9" height="9" fill="#f0a060"/>
<path d="M1597 628L1604 621A4 4 0 0 1 1609 616L1606 619L1607 621L1609 620A4 4 0 0 1 1604 624L1600 630Z" fill="#5a8fd0" stroke="#5a8fd0"/>
<circle cx="1598" cy="645" r="2.300" fill="#5a8fd0"/><circle cx="1608" cy="645" r="1.500" fill="#5a8fd0"/><circle cx="1608" cy="655" r="2.300" fill="#5a8fd0"/><circle cx="1598" cy="655" r="1.500" fill="#5a8fd0"/><path d="M1598 645L1608 655M1598 645V655M1598 645H1608" stroke="#5a8fd0"/>
<circle cx="1603" cy="678" r="6" fill="none" stroke="#5a8fd0" stroke-width="1.300" stroke-dasharray="12 4"/><circle cx="1603" cy="678" r="2.500" fill="#5a8fd0"/><circle cx="1608" cy="673" r="1.500" fill="#5a8fd0"/>
<ellipse cx="1603" cy="706" rx="6" ry="4" fill="none" stroke="#5a8fd0" stroke-width="1.500" transform="rotate(-40 1603 706)"/><circle cx="1603" cy="706" r="1.500" fill="#5a8fd0"/>
<path d="M1597 729H1609L1603 741ZM1596 728h3v3h-3ZM1608 728h3v3h-3ZM1602 739h3v3h-3Z" fill="none" stroke="#20c090" stroke-width="1.200"/>
<circle cx="1603" cy="762" r="6.500" fill="#b84a5a"/><path d="M1603 755.500V762L1609 765A6.500 6.500 0 0 0 1603 755.500Z" fill="#eee"/>
<path d="M1596 791h14v14h-14Z" fill="#b84a5a"/><path d="M1596 791h3.500v3.500H1596ZM1603 791h3.500v3.500H1603ZM1599.500 794.500H1603V798H1599.500ZM1606.500 794.500H1610V798H1606.500ZM1596 798h3.500v3.500H1596ZM1603 798h3.500v3.500H1603ZM1599.500 801.500H1603V805H1599.500ZM1606.500 801.500H1610V805H1606.500Z" fill="#3a3a3a"/>

<!-- redo panel icons -->
<use href="#td" x="71" y="764"/>
<path d="M326 876L329.500 879.500L333 876M326 898L329.500 901.500L333 898" fill="none" stroke="#c8c8c8" stroke-width="1.300"/>

<!-- timeline icons -->
<circle cx="20" cy="960" r="7" fill="#ddd"/><path d="M20 955V960L16 964" fill="none" stroke="#333" stroke-width="1.500"/><use href="#chev" x="30" y="958"/><use href="#chev" x="81" y="958"/><use href="#chev" x="162" y="958"/>
<circle cx="720" cy="960" r="3.500" fill="#ddd"/>
<path d="M741 954V966M750 954L744 960L750 966ZM757 960L761 954L765 960L761 966ZM768 960L774 954V966ZM781 960L785 954V966ZM798 954L806 960L798 966ZM820 954L826 960L820 966ZM829 954L835 960L829 966ZM844 954L850 960L844 966ZM852 954V966" fill="#e4e4e4" stroke="#e4e4e4" stroke-width=".8"/>
<circle cx="1383" cy="961" r="6" fill="none" stroke="#ddd" stroke-width="1.300"/><path d="M1380 953H1386M1383 957V961" stroke="#ddd" stroke-width="1.200"/>
<!-- track ticks -->
<path stroke="#2b2b2b" fill="none" d="M110 995V1019M169 995V1019M228 995V1019M287 995V1019M346 995V1019M405 995V1019M464 995V1019M523 995V1019M582 995V1019M640 995V1019M699 995V1019M758 995V1019M817 995V1019M876 995V1019M935 995V1019M994 995V1019M1053 995V1019M1112 995V1019M1171 995V1019M1230 995V1019M1289 995V1019M1347 995V1019M1406 995V1019M1465 995V1019"/>
<path stroke="#323232" fill="none" d="M81 995V1019M140 995V1019M199 995V1019M258 995V1019M317 995V1019M376 995V1019M435 995V1019M494 995V1019M553 995V1019M611 995V1019M670 995V1019M729 995V1019M788 995V1019M847 995V1019M906 995V1019M965 995V1019M1024 995V1019M1083 995V1019M1142 995V1019M1201 995V1019M1260 995V1019M1318 995V1019M1377 995V1019M1436 995V1019M1495 995V1019M1553 995V1019"/>
<path d="M1527 993V1019" stroke="#111"/>
<path d="M58 993V1019" stroke="#4f86d3"/>
<rect x="9" y="1009" width="1567" height="8" rx="4" fill="#656565"/><circle cx="13" cy="1013" r="3.500" fill="#7a7a7a"/><circle cx="1572" cy="1013" r="3.500" fill="#7a7a7a"/>
<rect x="0" y="987" width="7" height="14" rx="2" fill="#333"/><path d="M2 990L5 994L2 998" fill="none" stroke="#999"/>
<rect x="1578" y="987" width="7" height="14" rx="2" fill="#333"/><path d="M1583 990L1580 994L1583 998" fill="none" stroke="#999"/>
<!-- status mice -->
<use href="#mouse" x="13" y="1022"/><use href="#mouse" x="69" y="1022"/><path d="M79 1023C81 1025 81 1028 80 1030" fill="none" stroke="#c8c8c8"/><use href="#mouse" x="249" y="1022"/><use href="#mouse" x="485" y="1022"/>

<!-- handwriting -->
<g font-family="'Noto Sans CJK JP','Noto Sans CJK SC',sans-serif" font-size="100" font-weight="300" fill="#c44ae6">
<text transform="translate(508 477) scale(.95 .98) rotate(-4 45 -40)" stroke="#c44ae6" stroke-width="1.500">①</text>
<text transform="translate(384 900) scale(.74 .70)" stroke="#c44ae6" stroke-width="1.500">③</text>
<text transform="translate(473 876) scale(.4 .38)" stroke="#c44ae6" stroke-width="3">で</text>
<text transform="translate(525 870) scale(.6 .72)" stroke="#c44ae6" stroke-width="1.500">作</text>
<text transform="translate(580 880) scale(.35 .38)" stroke="#c44ae6" stroke-width="3">っ</text>
<text transform="translate(601 848) scale(.5 .72)" stroke="#c44ae6" stroke-width="1.500">た</text>
<text transform="translate(656 867) scale(.85 1.05)">座</text>
<text transform="translate(742 850) scale(1.12 .9)">標</text>
<text transform="translate(852 848) scale(.56 .75)" stroke="#c44ae6" stroke-width="1.500">系</text>
<text transform="translate(904 837) scale(.56 .48)" stroke="#c44ae6" stroke-width="2.500">を</text>
<text transform="translate(742 952) scale(1.18 .92)">選</text>
<text transform="translate(858 930) scale(.97 .72)">択</text>
</g>
</svg>
</body></html>
